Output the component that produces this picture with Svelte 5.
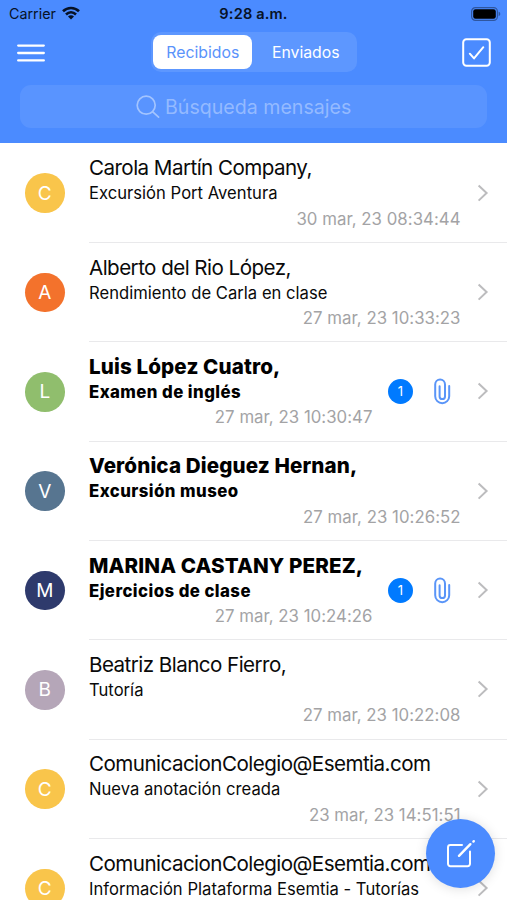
<script lang="ts">
  interface Message {
    sender: string;
    subject: string;
    date: string;
    color: string;
    unread?: boolean;
    attachments?: number;
  }

  const messages: Message[] = [
    { sender: 'Carola Martín Company,', subject: 'Excursión Port Aventura', date: '30 mar, 23 08:34:44', color: '#f9c54b' },
    { sender: 'Alberto del Rio López,', subject: 'Rendimiento de Carla en clase', date: '27 mar, 23 10:33:23', color: '#f3722c' },
    { sender: 'Luis López Cuatro,', subject: 'Examen de inglés', date: '27 mar, 23 10:30:47', color: '#90be6d', unread: true, attachments: 1 },
    { sender: 'Verónica Dieguez Hernan,', subject: 'Excursión museo', date: '27 mar, 23 10:26:52', color: '#577590', unread: true },
    { sender: 'MARINA CASTANY PEREZ,', subject: 'Ejercicios de clase', date: '27 mar, 23 10:24:26', color: '#2e3a6c', unread: true, attachments: 1 },
    { sender: 'Beatriz Blanco Fierro,', subject: 'Tutoría', date: '27 mar, 23 10:22:08', color: '#b5a6b8' },
    { sender: 'ComunicacionColegio@Esemtia.com', subject: 'Nueva anotación creada', date: '23 mar, 23 14:51:51', color: '#f9c54b' },
    { sender: 'ComunicacionColegio@Esemtia.com', subject: 'Información Plataforma Esemtia - Tutorías', date: '', color: '#f9c54b' },
  ];

  let tab = $state('Recibidos');
  let search = $state('');
</script>

<div class="screen">
  <header>
    <div class="status-bar">
      <div class="carrier">
        <span>Carrier</span>
        <svg width="18" height="14" viewBox="0 0 18 14" fill="none" stroke="#071226" stroke-width="2.6">
          <path d="M1 5.3C5.6.9 12.4.9 17 5.3" />
          <path d="M4 8.5c3-2.9 7-2.9 10 0" />
          <path d="M9 13.4 6 10.4c1.7-1.6 4.3-1.6 6 0z" fill="#071226" stroke="none" />
        </svg>
      </div>
      <span class="clock">9:28 a.m.</span>
      <svg class="battery" width="30" height="14" viewBox="0 0 30 14">
        <rect x="0.6" y="0.6" width="25.8" height="12.8" rx="3.8" fill="none" stroke="#2f569f" stroke-width="1.2" />
        <rect x="2.2" y="2.2" width="22.6" height="9.6" rx="2.3" fill="#000" />
        <path d="M27.6 4.8c2.2.6 2.2 3.8 0 4.4z" fill="#2f569f" />
      </svg>
    </div>

    <div class="nav-bar">
      <button class="icon-btn" aria-label="Menú">
        <svg width="28" height="18" viewBox="0 0 28 18" stroke="#fff" stroke-width="2.3" stroke-linecap="round">
          <path d="M1.2 1.6h25.6M1.2 9h25.6M1.2 16.4h25.6" />
        </svg>
      </button>
      <div class="tabs">
        {#each ['Recibidos', 'Enviados'] as name}
          <button class="tab" class:active={tab === name} onclick={() => (tab = name)}>{name}</button>
        {/each}
      </div>
      <button class="icon-btn" aria-label="Seleccionar">
        <svg width="29" height="29" viewBox="0 0 29 29" fill="none" stroke="#fff" stroke-width="2" stroke-linecap="round" stroke-linejoin="round">
          <rect x="1.2" y="1.2" width="26.6" height="26.6" rx="3.2" />
          <path d="m7.8 15.7 4.2 4.7 9.3-11.2" />
        </svg>
      </button>
    </div>

    <label class="search">
      <svg width="24" height="24" viewBox="0 0 24 24" fill="none" stroke="#a3c4ff" stroke-width="1.7" stroke-linecap="round">
        <circle cx="10.2" cy="10.2" r="9" />
        <path d="m16.8 16.8 5.8 5.4" />
      </svg>
      <input type="text" placeholder="Búsqueda mensajes" bind:value={search} />
    </label>
  </header>

  <main>
    {#each messages as message}
      <div class="row" class:unread={message.unread}>
        <div class="avatar" style:background={message.color}>{message.sender[0]}</div>
        <div class="content">
          <div class="text">
            <div class="sender">{message.sender}</div>
            <div class="subject">{message.subject}</div>
            <div class="date">{message.date}</div>
          </div>
          {#if message.attachments}
            <div class="attachments">
              <span class="count">{message.attachments}</span>
              <svg width="18" height="28" viewBox="0 0 18 28" fill="none" stroke="#5a95f8" stroke-width="2" stroke-linecap="round">
                <path d="M6.6 9.2v10.2a2.7 2.7 0 0 0 5.4 0V7.4a4.8 4.8 0 0 0-9.8 0v11.8a7 7 0 0 0 14 0V9" />
              </svg>
            </div>
          {/if}
          <svg class="chevron" width="12" height="18" viewBox="0 0 12 18" fill="none" stroke="#bcbcbe" stroke-width="2">
            <path d="m1.6 1.4 8 7.6-8 7.6" />
          </svg>
        </div>
      </div>
    {/each}
  </main>

  <button class="compose" aria-label="Nuevo mensaje">
    <svg width="30" height="30" viewBox="0 0 30 30" fill="none" stroke="#fff" stroke-width="2" stroke-linecap="round" stroke-linejoin="round">
      <path d="M16 6H4.4A2.4 2.4 0 0 0 2 8.400v16.400a2.4 2.4 0 0 0 2.400 2.400h17.200a2.4 2.4 0 0 0 2.400-2.400V12.400" />
      <path d="m13 16.800 11.400-11.600M27.400 2.600l.4-.4" stroke-width="2.4" />
    </svg>
  </button>
</div>

<style>
  :global(body) {
    background: #fff;
    overflow: hidden;
  }

  .screen {
    position: relative;
    width: 507px;
    height: 900px;
    overflow: hidden;
    font-family: Inter, 'Liberation Sans', sans-serif;
    color: #0a0a0a;
  }

  button {
    border: none;
    padding: 0;
    background: none;
    font: inherit;
    cursor: pointer;
  }

  svg {
    display: block;
    flex: none;
  }

  header {
    box-sizing: border-box;
    height: 142.5px;
    background: #4b8bff;
  }

  .status-bar {
    display: grid;
    grid-template-columns: 1fr auto 1fr;
    align-items: center;
    height: 27px;
    padding: 0 6px 0 9px;
    color: #071226;
    font-size: 14.3px;
  }

  .carrier {
    display: flex;
    align-items: center;
    gap: 6px;
  }

  .carrier svg {
    margin-top: -2px;
  }

  .clock {
    margin-left: -3px;
    font-size: 14.6px;
    font-weight: 600;
    letter-spacing: 0.15px;
  }

  .battery {
    justify-self: end;
  }

  .nav-bar {
    display: flex;
    align-items: center;
    justify-content: space-between;
    height: 50px;
    padding: 0 16px 0 16.5px;
  }

  .icon-btn {
    padding-top: 1px;
  }

  .tabs {
    display: flex;
    box-sizing: border-box;
    width: 206px;
    height: 40px;
    margin-left: 2px;
    padding: 3px 2px;
    border-radius: 10px;
    background: #5d97ff;
  }

  .tab {
    flex: 1;
    padding-left: 4px;
    color: #fff;
    font-size: 15.8px;
    border-radius: 8px;
  }

  .tab.active {
    flex: none;
    width: 99px;
    padding-left: 0;
    background: #fff;
    color: #5a93fb;
  }

  .search {
    display: flex;
    align-items: center;
    gap: 5px;
    box-sizing: border-box;
    height: 43px;
    margin: 8px 20px 0;
    padding-left: 116px;
    border-radius: 11px;
    background: #5994ff;
  }

  .search input {
    width: 240px;
    padding: 0;
    border: none;
    outline: none;
    background: none;
    color: #fff;
    font: inherit;
    font-size: 19.6px;
  }

  .search input::placeholder {
    color: #94baff;
    opacity: 1;
  }

  main {
    padding-top: 1px;
  }

  .row {
    display: flex;
    align-items: center;
    height: 99.35px;
    padding-left: 25px;
  }

  .avatar {
    flex: none;
    display: flex;
    align-items: center;
    justify-content: center;
    width: 39.5px;
    height: 39.5px;
    margin-right: 24.5px;
    border-radius: 50%;
    color: #fff;
    font-size: 19px;
  }

  .content {
    flex: 1;
    display: flex;
    align-items: center;
    box-sizing: border-box;
    height: 100%;
    padding-right: 18px;
    border-bottom: 1px solid #e9e9eb;
  }

  .text {
    flex: 1;
    min-width: 0;
    padding-top: 2px;
    white-space: nowrap;
  }

  .sender {
    font-size: 20.6px;
    line-height: 26px;
    letter-spacing: -0.55px;
  }

  .subject {
    font-size: 16.6px;
    line-height: 25.5px;
    letter-spacing: 0.02px;
  }

  .date {
    height: 25.5px;
    padding-right: 0.5px;
    color: #a3a3a5;
    font-size: 16.8px;
    line-height: 25.5px;
    letter-spacing: 0.03px;
    text-align: right;
  }

  .unread .sender,
  .unread .subject {
    color: #000;
    font-weight: 800;
    letter-spacing: 0.12px;
  }

  .unread .subject {
    font-size: 16.8px;
    letter-spacing: 0.44px;
  }

  .attachments {
    display: flex;
    align-items: center;
    gap: 20px;
    padding-left: 15px;
    margin-right: -6px;
  }

  .count {
    width: 25px;
    height: 25px;
    border-radius: 50%;
    background: #007aff;
    color: #fff;
    font-size: 13px;
    line-height: 25px;
    text-align: center;
  }

  .chevron {
    margin-left: 16px;
  }

  .attachments + .chevron {
    margin-left: 32px;
  }

  .compose {
    position: absolute;
    right: 12px;
    bottom: 12px;
    display: flex;
    align-items: center;
    justify-content: center;
    width: 69px;
    height: 69px;
    border-radius: 50%;
    background: #4b8bff;
    box-shadow: 0 1px 12px rgba(0, 0, 0, 0.13);
  }
</style>
